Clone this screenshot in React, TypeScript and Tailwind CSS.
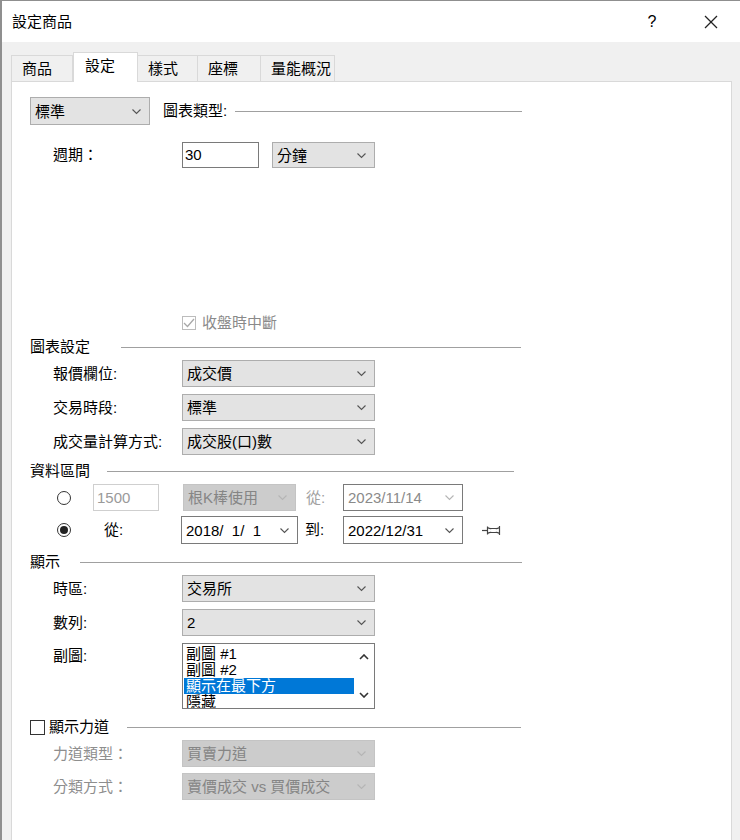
import React from "react";

const Chevron = ({ color = "#555" }: { color?: string }) => (
  <svg width="11" height="7" viewBox="0 0 11 7" className="shrink-0">
    <polyline points="1.5,1.5 5.5,5.5 9.5,1.5" fill="none" stroke={color} strokeWidth="1.1" />
  </svg>
);

type SelectProps = {
  value: string;
  w: string;
  h?: string;
  variant?: "normal" | "disabled" | "date" | "dateOff";
};

const Select = ({ value, w, h = "h-[27px]", variant = "normal" }: SelectProps) => {
  const styles = {
    normal: "bg-[#e3e3e3] border-[#adadad] text-black",
    disabled: "bg-[#cccccc] border-[#c4c4c4] text-[#858585]",
    date: "bg-white border-[#7a7a7a] text-black",
    dateOff: "bg-white border-[#7a7a7a] text-[#8a8a8a]",
  }[variant];
  const arrow = variant === "disabled" || variant === "dateOff" ? "#b5b5b5" : "#555";
  return (
    <div className={`${w} ${h} ${styles} border flex items-center justify-between pl-[4px] pr-[7px] shrink-0`}>
      <span className="whitespace-pre leading-none">{value}</span>
      <Chevron color={arrow} />
    </div>
  );
};

const Header = ({ children, lineStart, lineEnd = 522 }: { children: React.ReactNode; lineStart: number; lineEnd?: number }) => (
  <div className="h-[20px] flex items-center">
    <div className="ml-[18px] flex items-center">{children}</div>
    <div className="flex-1 flex items-center">
      <div className="h-px bg-[#a0a0a0]" style={{ width: lineEnd - lineStart }} />
    </div>
  </div>
);

const Row = ({ label, children, labelClass = "text-black" }: { label: string; children: React.ReactNode; labelClass?: string }) => (
  <div className="flex items-center">
    <div className={`ml-[41px] w-[129px] shrink-0 ${labelClass}`}>{label}</div>
    {children}
  </div>
);

const Radio = ({ checked = false }: { checked?: boolean }) => (
  <div className="ml-[45px] w-[14px] h-[14px] rounded-full border border-[#333] flex items-center justify-center shrink-0">
    {checked && <div className="w-[8px] h-[8px] rounded-full bg-[#222]" />}
  </div>
);

const Tab = ({ label, active = false, w }: { label: string; active?: boolean; w: string }) =>
  active ? (
    <div className={`${w} h-[30px] bg-white border border-b-0 border-[#d9d9d9] -mb-px z-10 flex items-start pt-[3px] pl-[11px]`}>
      {label}
    </div>
  ) : (
    <div className={`${w} h-[26px] bg-[#f0f0f0] border border-b-0 border-[#d9d9d9] -ml-px flex items-start pt-[3px] pl-[10px]`}>
      {label}
    </div>
  );

export default function App() {
  return (
    <div className="w-[740px] h-[840px] overflow-hidden bg-[#f0f0f0] border-l-2 border-t border-[#8f8f8f] text-[15px] leading-[20px] text-black font-['Liberation_Sans','Noto_Sans_CJK_TC',sans-serif]">
      {/* title bar */}
      <div className="h-[41px] bg-white flex items-center">
        <div className="ml-[10px] flex-1">設定商品</div>
        <div className="w-[20px] text-center mr-[42px] text-[16px]">?</div>
        <svg width="14" height="14" viewBox="0 0 14 14" className="mr-[22px]">
          <line x1="1" y1="1" x2="13" y2="13" stroke="#222" strokeWidth="1.2" />
          <line x1="13" y1="1" x2="1" y2="13" stroke="#222" strokeWidth="1.2" />
        </svg>
      </div>

      <div className="pl-[9px] pr-[8px] pt-[9px]">
        {/* tabs */}
        <div className="flex items-end h-[30px] pl-px">
          <Tab label="商品" w="w-[62px]" />
          <Tab label="設定" w="w-[65px]" active />
          <Tab label="樣式" w="w-[61px]" />
          <Tab label="座標" w="w-[64px]" />
          <Tab label="量能概況" w="w-[75px]" />
        </div>

        {/* panel */}
        <div className="bg-white border border-[#d9d9d9] h-[800px]">
          <div className="mt-[15px] h-[28px] flex items-center">
            <div className="ml-[18px]">
              <Select value="標準" w="w-[120px]" h="h-[28px]" />
            </div>
            <div className="ml-[13px]">圖表類型:</div>
            <div className="ml-[8px] h-px w-[287px] bg-[#a0a0a0]" />
          </div>

          <div className="mt-[17px] h-[26px]">
            <Row label="週期：">
              <div className="w-[77px] h-[26px] border border-[#7a7a7a] bg-white pl-[2px] flex items-center shrink-0">30</div>
              <div className="ml-[13px]">
                <Select value="分鐘" w="w-[103px]" h="h-[26px]" />
              </div>
            </Row>
          </div>

          <div className="mt-[145px] h-[20px] flex items-center">
            <div className="ml-[170px] w-[14px] h-[14px] border border-[#bcbcbc] flex items-center justify-center">
              <svg width="12" height="10" viewBox="0 0 12 10">
                <polyline points="1,5 4.5,8.5 11,1" fill="none" stroke="#a8a8a8" strokeWidth="1.3" />
              </svg>
            </div>
            <div className="ml-[6px] text-[#8a8a8a]">收盤時中斷</div>
          </div>

          <div className="mt-[4px]">
            <Header lineStart={122}>
              <span>圖表設定</span>
              <span className="w-[31px]" />
            </Header>
          </div>

          <div className="mt-[3px] flex flex-col gap-[7px]">
            <Row label="報價欄位:">
              <Select value="成交價" w="w-[193px]" />
            </Row>
            <Row label="交易時段:">
              <Select value="標準" w="w-[193px]" />
            </Row>
            <Row label="成交量計算方式:">
              <Select value="成交股(口)數" w="w-[193px]" />
            </Row>
          </div>

          <div className="mt-[6px]">
            <Header lineStart={108} lineEnd={515}>
              <span>資料區間</span>
              <span className="w-[17px]" />
            </Header>
          </div>

          <div className="mt-[3px] h-[27px] flex items-center">
            <Radio />
            <div className="ml-[22px] w-[66px] h-[27px] border border-[#cfcfcf] text-[#9a9a9a] pl-[3px] flex items-center">1500</div>
            <div className="ml-[24px]">
              <Select value="根K棒使用" w="w-[113px]" variant="disabled" />
            </div>
            <div className="ml-[10px] w-[37px] text-[#a0a0a0]">從:</div>
            <Select value="2023/11/14" w="w-[120px]" variant="dateOff" />
          </div>

          <div className="mt-[5px] h-[28px] flex items-center">
            <Radio checked />
            <div className="ml-[33px] w-[77px]">從:</div>
            <Select value="2018/  1/  1" w="w-[117px]" h="h-[28px]" variant="date" />
            <div className="ml-[7px] w-[38px]">到:</div>
            <Select value="2022/12/31" w="w-[120px]" h="h-[28px]" variant="date" />
            <svg width="20" height="11" viewBox="0 0 20 11" className="ml-[19px]">
              <line x1="0" y1="5.5" x2="5" y2="5.5" stroke="#444" strokeWidth="1.2" />
              <path
                d="M5.5 1.5 L5.5 9.5 M5.5 2.5 Q8 4 9.5 3.5 L13.5 3.5 Q15 4 17.5 2.5 M5.5 8.5 Q8 7 9.5 7.5 L13.5 7.5 Q15 7 17.5 8.5 M17.5 1 L17.5 10"
                fill="none"
                stroke="#444"
                strokeWidth="1.2"
              />
            </svg>
          </div>

          <div className="mt-[8px]">
            <Header lineStart={80}>
              <span>顯示</span>
              <span className="w-[20px]" />
            </Header>
          </div>

          <div className="mt-[3px] flex flex-col gap-[7px]">
            <Row label="時區:">
              <Select value="交易所" w="w-[193px]" />
            </Row>
            <Row label="數列:">
              <Select value="2" w="w-[193px]" />
            </Row>
          </div>

          <div className="mt-[7px] flex items-start">
            <div className="ml-[41px] w-[129px] mt-[3px]">副圖:</div>
            <div className="w-[193px] h-[66px] border border-[#7a7a7a] bg-white flex overflow-hidden">
              <div className="flex-1 pl-[1px] pt-[2px] leading-[16px]">
                <div className="pl-[2px]">副圖 #1</div>
                <div className="pl-[2px]">副圖 #2</div>
                <div className="pl-[2px] bg-[#0078d7] text-white">顯示在最下方</div>
                <div className="pl-[2px]">隱藏</div>
              </div>
              <div className="w-[20px] flex flex-col items-center justify-between py-[10px]">
                <svg width="10" height="6" viewBox="0 0 10 6">
                  <polyline points="1,5 5,1 9,5" fill="none" stroke="#333" strokeWidth="1.6" />
                </svg>
                <svg width="10" height="6" viewBox="0 0 10 6">
                  <polyline points="1,1 5,5 9,1" fill="none" stroke="#333" strokeWidth="1.6" />
                </svg>
              </div>
            </div>
          </div>

          <div className="mt-[8px] h-[20px] flex items-center">
            <div className="ml-[18px] w-[15px] h-[15px] border border-[#333] bg-white" />
            <div className="ml-[4px]">顯示力道</div>
            <div className="ml-[18px] h-px w-[394px] bg-[#a0a0a0]" />
          </div>

          <div className="mt-[3px] flex flex-col gap-[6px]">
            <Row label="力道類型：" labelClass="text-[#8e8e8e]">
              <Select value="買賣力道" w="w-[193px]" variant="disabled" />
            </Row>
            <Row label="分類方式：" labelClass="text-[#8e8e8e]">
              <Select value="賣價成交 vs 買價成交" w="w-[193px]" variant="disabled" />
            </Row>
          </div>
        </div>
      </div>
    </div>
  );
}
